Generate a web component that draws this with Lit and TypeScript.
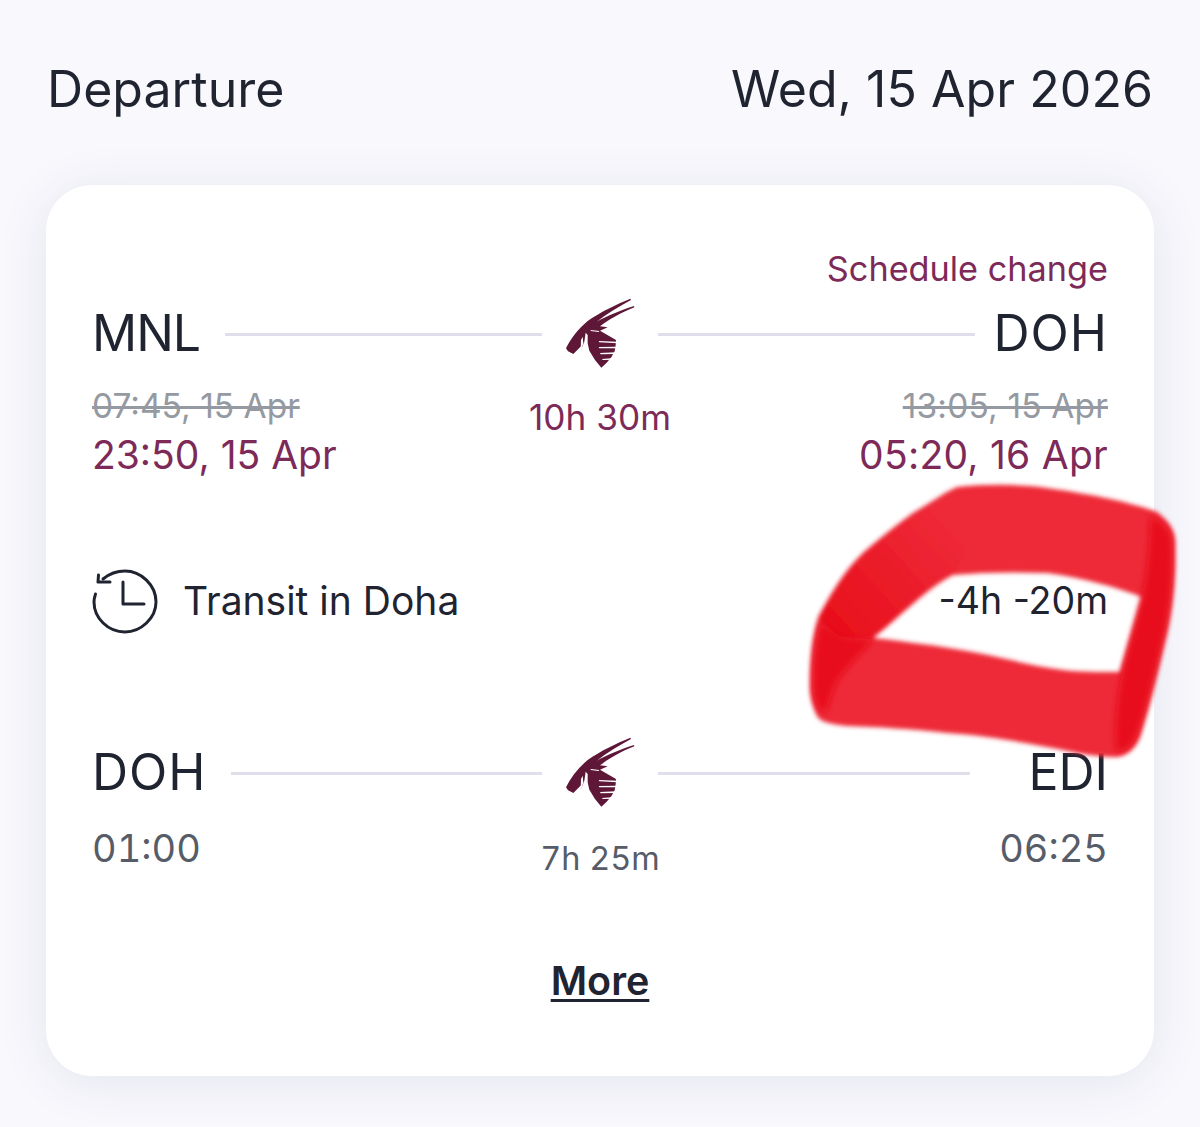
import { LitElement, html, css, svg } from "lit";
import { customElement } from "lit/decorators.js";

const logo = svg`<svg class="logo" viewBox="0 0 360 300" width="120" height="100" aria-hidden="true">
  <path fill="#5f1738" d="M78 205 C92 176 113 148 143 123 C180 97 230 72 271 56 L273 60 C235 81 200 102 170 125 C200 108 245 90 282 78 L283 82 C240 99 207 119 180 139 L203 142 L180 152 L228 180 L227 196 L224 214 L214 232 L200 248 L184 263 L165 240 L148 212 L143 190 L143 165 L137 158 L133 185 L122 212 L126 196 L100 222 L84 214 Z"/>
  <path fill="#fff" d="M176 183 L232 185 L232 190 L178 187 Z M176 201 L230 200 L230 205 L178 205 Z M180 219 L228 217 L228 222 L182 223 Z M186 237 L222 234 L220 239 L188 240 Z M152 150 L178 153 L176 156 L152 153 Z M123 180 L128 170 L130 190 L125 206 L122 212 Z"/>
</svg>`;

const clock = svg`<svg class="clock" viewBox="0 0 66 66" width="66" height="66" aria-hidden="true" fill="none" stroke="#1f2430" stroke-width="3" stroke-linecap="round" stroke-linejoin="round">
  <path d="M11 10 C17 5 24 2 33 2 C49 2 64 16 64 33 C64 49 49 63 33 63 C16 63 2 49 2 33 C2 30 2.5 28 3.5 25"/>
  <path d="M6.5 6 L6 13 L18 13"/>
  <path d="M31 13 L31 35 L52 35"/>
</svg>`;

const scribble = svg`<svg class="scribble" viewBox="0 0 1200 1127" width="1200" height="1127" aria-hidden="true">
  <defs>
    <filter id="soft" x="-10%" y="-10%" width="120%" height="120%"><feGaussianBlur stdDeviation="2"/></filter>
    <filter id="softer" x="-20%" y="-20%" width="140%" height="140%"><feGaussianBlur stdDeviation="3"/></filter>
    <linearGradient id="fade" gradientUnits="userSpaceOnUse" x1="840" y1="640" x2="960" y2="530">
      <stop offset="0" stop-color="#e80f1c"/><stop offset="1" stop-color="#e80f1c" stop-opacity="0"/>
    </linearGradient>
  </defs>
  <g filter="url(#soft)">
    <path fill="#ee2a38" fill-rule="evenodd" d="M957 487 C985 484 1020 484 1047 488 C1090 494 1130 502 1157 512 C1170 522 1176 532 1175 545 C1176 580 1172 610 1167 632 C1158 670 1150 705 1140 737 C1135 750 1125 757 1115 757 C1090 757 1065 750 1047 747 C1010 740 980 735 947 733 C910 729 880 727 847 726 C830 724 820 722 817 716 C812 705 810 695 810 687 C810 660 812 638 818 618 C830 595 845 570 863 553 C880 538 898 524 913 513 C930 503 945 492 957 487 Z M953 575 C985 572 1015 572 1047 573 C1085 578 1115 587 1142 597 L1120 672 C1100 672 1080 672 1063 670 C1040 667 1020 662 997 657 C970 651 940 646 913 643 C900 641 885 639 873 638 C890 625 905 610 925 593 C935 585 945 579 953 575 Z"/>
    <path fill="url(#fade)" d="M818 618 C830 595 845 570 863 553 C880 538 898 524 913 513 C930 503 945 492 957 487 L1000 487 L953 575 C935 585 905 610 873 638 L835 640 Z"/>
  </g>
  <g filter="url(#softer)">
    <path fill="#e80f1c" d="M1150 516 C1168 524 1172 534 1172 545 C1173 580 1170 610 1165 632 C1156 670 1148 705 1137 735 C1132 746 1125 752 1116 752 C1114 720 1118 695 1122 672 L1142 597 C1148 565 1150 540 1150 516 Z"/>
    <path fill="#e80f1c" d="M873 640 C860 655 845 668 835 685 L826 712 C818 712 814 703 813 687 C813 660 815 640 821 622 L840 636 C850 638 862 638 873 640 Z"/>
  </g>
</svg>`;

@customElement("app-root")
export class AppRoot extends LitElement {
  static styles = css`
    :host {
      display: block;
      position: relative;
      width: 1200px;
      height: 1127px;
      overflow: hidden;
      box-sizing: border-box;
      padding: 55px 46px 0;
      background: #f8f8fd;
      font-family: Inter, "Liberation Sans", sans-serif;
      color: #1f2430;
    }
    .head {
      display: flex;
      justify-content: space-between;
      align-items: center;
      height: 68px;
      font-size: 50px;
      letter-spacing: 0.05px;
      padding: 0 1px;
    }
    .card {
      margin-top: 62px;
      height: 891px;
      box-sizing: border-box;
      padding: 60px 46px 0;
      background: #fff;
      border-radius: 46px;
      box-shadow: 0 6px 50px rgba(60, 64, 110, 0.1);
    }
    .notice {
      height: 48px;
      line-height: 48px;
      text-align: right;
      font-size: 34.25px;
      color: #7d2a58;
    }
    .codes {
      display: grid;
      grid-template-columns: 1fr 116px 1fr;
      align-items: center;
      height: 80px;
      font-size: 50px;
    }
    .side { display: flex; align-items: center; gap: 25px; }
    .side.near { gap: 19px; }
    .tight { letter-spacing: -1px; }
    .wide { letter-spacing: 1px; }
    .slot { min-width: 113px; text-align: right; }
    .line {
      flex: 1;
      height: 3px;
      margin-top: 2px;
      background: #dedfea;
    }
    .logo { display: block; margin: -13px -2px -7px; }
    .times {
      display: grid;
      grid-template-columns: 1fr auto 1fr;
      margin-top: 8px;
      font-size: 39px;
      line-height: 49px;
    }
    .times .end { text-align: right; }
    .old {
      color: #959aa2;
      font-size: 33.5px;
      text-decoration: line-through;
      padding-top: 1px;
      margin-bottom: -1px;
    }
    .new { color: #7d2a58; }
    .end .new { letter-spacing: 0.25px; }
    .end .old { letter-spacing: 0.15px; }
    .dur {
      font-size: 35.2px;
      padding-top: 12px;
      color: #7d2a58;
    }
    .times.plain {
      color: #565c68;
      margin-top: 12px;
      font-size: 38px;
      font-variant-numeric: tabular-nums;
    }
    .times.plain .dur { color: #565c68; font-size: 32.5px; padding-top: 10px; }
    .transit {
      display: flex;
      align-items: center;
      justify-content: space-between;
      height: 64px;
      margin-top: 89px;
      font-size: 39px;
    }
    .delta { font-size: 37.5px; }
    .label { display: flex; align-items: center; gap: 25px; }
    .clock { display: block; flex: none; margin-top: 3px; }
    .seg2 { margin-top: 100px; }
    .more {
      margin-top: 74px;
      text-align: center;
      font-size: 39.5px;
      line-height: 49px;
      font-weight: 600;
      text-decoration: underline;
      text-underline-offset: 4px;
    }
    .scribble { position: absolute; left: 0; top: 0; pointer-events: none; }
  `;

  render() {
    return html`
      <div class="head"><span>Departure</span><span>Wed, 15 Apr 2026</span></div>
      <section class="card">
        <div class="notice">Schedule change</div>
        <div class="codes">
          <div class="side"><span class="tight">MNL</span><i class="line"></i></div>
          ${logo}
          <div class="side near"><i class="line"></i><span class="wide">DOH</span></div>
        </div>
        <div class="times">
          <div>
            <div class="old">07:45, 15 Apr</div>
            <div class="new">23:50, 15 Apr</div>
          </div>
          <div class="dur">10h 30m</div>
          <div class="end">
            <div class="old">13:05, 15 Apr</div>
            <div class="new">05:20, 16 Apr</div>
          </div>
        </div>
        <div class="transit">
          <div class="label">${clock}<span>Transit in Doha</span></div>
          <div class="delta">-4h -20m</div>
        </div>
        <div class="codes seg2">
          <div class="side"><span class="wide">DOH</span><i class="line"></i></div>
          ${logo}
          <div class="side"><i class="line"></i><span class="slot">EDI</span></div>
        </div>
        <div class="times plain">
          <div>01:00</div>
          <div class="dur">7h 25m</div>
          <div class="end">06:25</div>
        </div>
        <div class="more">More</div>
      </section>
      ${scribble}
    `;
  }
}
